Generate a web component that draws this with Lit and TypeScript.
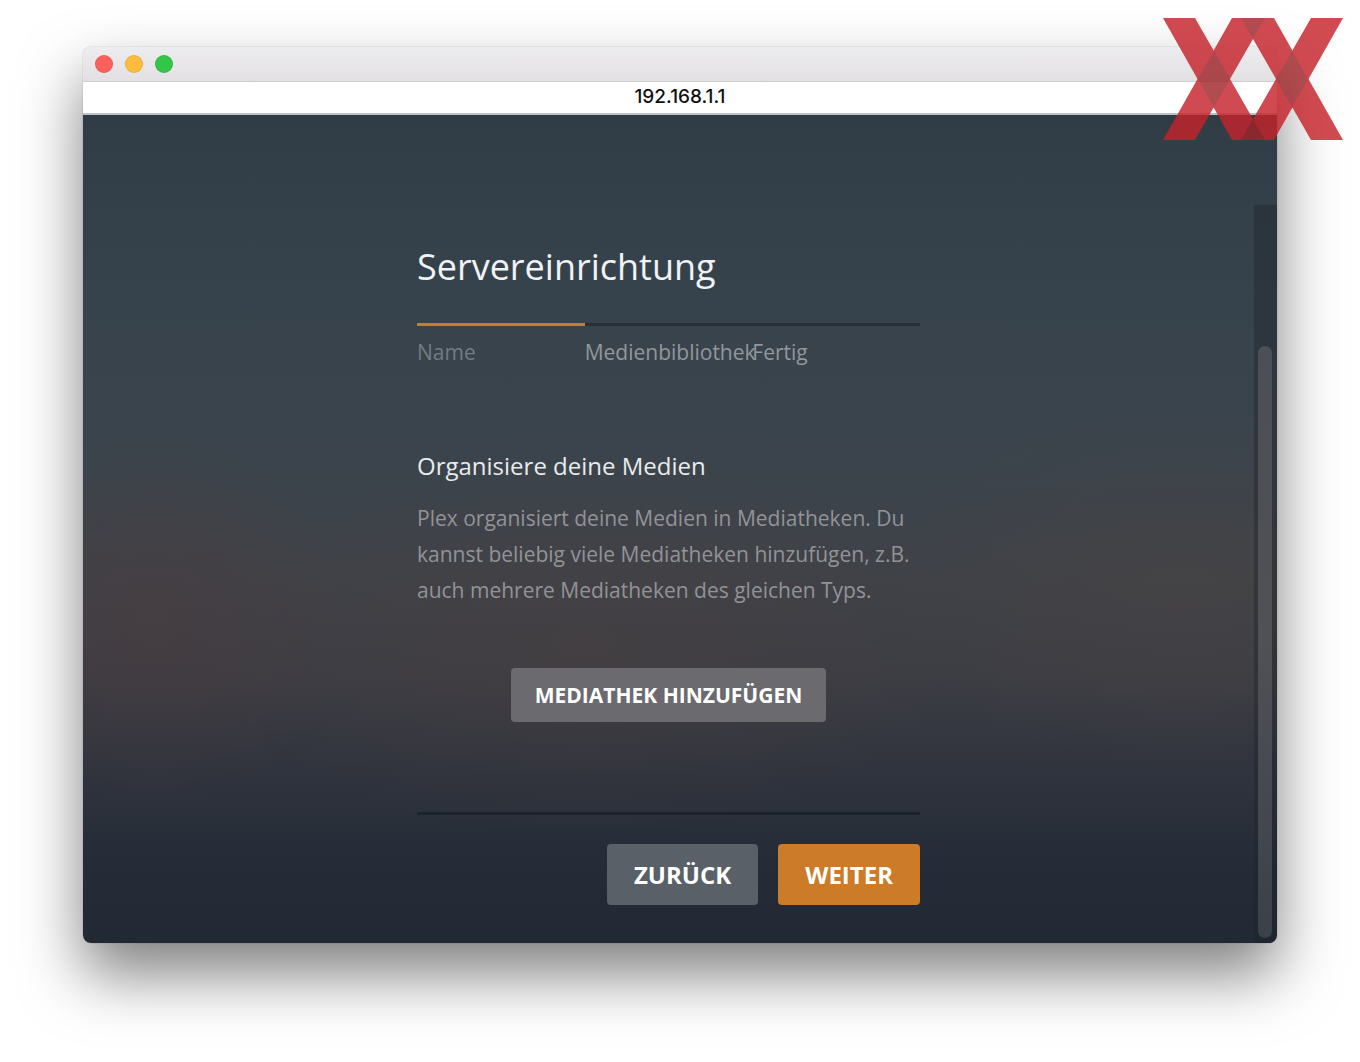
import { LitElement, html, css, svg } from "lit";
import { customElement, property } from "lit/decorators.js";

@customElement("brand-mark")
class BrandMark extends LitElement {
  static styles = css`
    :host {
      display: block;
      width: 180px;
      height: 122px;
    }
    .mark {
      display: block;
      width: 100%;
      height: 100%;
      opacity: 0.81;
    }
    .band {
      fill: #c52229;
    }
    .cross {
      fill: #9f2329;
    }
  `;

  private bands = [
    "0,0 32,0 102,122 69,122",
    "69,0 102,0 32,122 0,122",
    "78,0 111,0 180,122 148,122",
    "148,0 180,0 111,122 78,122",
  ];

  private crosses = [
    "51,33 67,61 51,89 35,61",
    "129,33 145,61 129,89 113,61",
    "78,0 102,0 90,21",
    "90,101 102,122 78,122",
  ];

  render() {
    return html`
      <svg class="mark" viewBox="0 0 180 122" preserveAspectRatio="none" aria-hidden="true">
        ${this.bands.map((p) => svg`<polygon class="band" points=${p} />`)}
        ${this.crosses.map((p) => svg`<polygon class="cross" points=${p} />`)}
      </svg>
    `;
  }
}

@customElement("setup-steps")
class SetupSteps extends LitElement {
  @property({ type: Array }) steps: string[] = [];
  @property({ type: Number }) done = 0;

  static styles = css`
    :host {
      display: block;
    }
    .steps {
      display: grid;
      grid-template-columns: repeat(3, minmax(0, 1fr));
      margin: 0;
      padding: 0;
      list-style: none;
    }
    .step {
      border-top: 3px solid #263038;
      padding-top: 8px;
      font-size: 21px;
      line-height: 36px;
      white-space: nowrap;
      color: #93979a;
    }
    .step.done {
      border-top-color: #cc7b29;
      color: #737b83;
    }
  `;

  render() {
    return html`
      <ol class="steps">
        ${this.steps.map(
          (name, i) => html`<li class="step ${i < this.done ? "done" : ""}">${name}</li>`
        )}
      </ol>
    `;
  }
}

@customElement("app-root")
class AppRoot extends LitElement {
  static styles = css`
    :host {
      display: block;
      position: relative;
      box-sizing: border-box;
      min-height: 100vh;
      padding: 47px 83px 119px;
      overflow: hidden;
      background: #fff;
      font-family: "Open Sans", "Noto Sans", sans-serif;
    }
    .window {
      display: flex;
      flex-direction: column;
      border-radius: 8px;
      box-shadow: 0 0 1px rgba(0, 0, 0, 0.5), 0 31px 62px rgba(0, 0, 0, 0.5);
    }
    .titlebar {
      display: flex;
      align-items: center;
      gap: 12px;
      height: 34px;
      padding: 0 12px;
      border-bottom: 1px solid #cfcdcf;
      border-radius: 8px 8px 0 0;
      background: linear-gradient(#edecee, #e2e0e3);
    }
    .light {
      box-sizing: border-box;
      width: 18px;
      height: 18px;
      padding: 0;
      border: 1px solid rgba(0, 0, 0, 0.08);
      border-radius: 50%;
    }
    .close {
      background: #fc605c;
    }
    .minimise {
      background: #fdbc40;
    }
    .zoom {
      background: #33c748;
    }
    .address {
      height: 31px;
      border-bottom: 2px solid #bcc3c5;
      background: #fff;
      color: #111;
      font: 500 19px/30px Inter, sans-serif;
      text-align: center;
    }
    .page {
      display: flex;
      border-radius: 0 0 8px 8px;
      background:
        radial-gradient(ellipse 190px 190px at 6% 61%, rgba(80, 58, 60, 0.4), transparent),
        radial-gradient(ellipse 380px 190px at 42% 64%, rgba(76, 64, 64, 0.4), transparent),
        radial-gradient(ellipse 300px 180px at 92% 57%, rgba(76, 68, 66, 0.4), transparent),
        linear-gradient(#303d47 0%, #37434c 22%, #3b444c 42%, #3f4248 56%, #3c3d44 68%, #2f333d 80%, #252c37 90%, #222935 100%);
    }
    .content {
      display: flex;
      flex: 1;
      justify-content: center;
      padding: 126px 20px 38px;
    }
    .form {
      width: 100%;
      max-width: 503px;
    }
    .title {
      margin: 0 0 30px;
      color: #f0f2f3;
      font-size: 36px;
      font-weight: 400;
      line-height: 52px;
    }
    .subtitle {
      margin: 78px 0 16px;
      color: #e9ebec;
      font-size: 24px;
      font-weight: 400;
      line-height: 36px;
    }
    .text {
      margin: 0;
      color: #929397;
      font-size: 21px;
      line-height: 36px;
    }
    .library {
      display: flex;
      justify-content: center;
      padding: 60px 0 90px;
      border-bottom: 3px solid #1c222c;
    }
    .actions {
      display: flex;
      justify-content: flex-end;
      gap: 20px;
      padding-top: 29px;
    }
    .button {
      border: 0;
      border-radius: 4px;
      color: #fff;
      font-family: inherit;
      font-weight: 700;
      cursor: pointer;
    }
    .add {
      height: 54px;
      padding: 0 24px;
      background: #6b6a6f;
      font-size: 21px;
    }
    .back,
    .next {
      height: 61px;
      padding: 0 27px;
      font-size: 24px;
    }
    .back {
      background: #5a6068;
    }
    .next {
      background: #cc7b29;
    }
    .scroll {
      display: flex;
      box-sizing: border-box;
      width: 23px;
      margin-top: 90px;
      padding: 141px 5px 5px 4px;
      border-radius: 0 0 8px 0;
      background: rgba(30, 34, 42, 0.4);
    }
    .thumb {
      flex: 1;
      border-radius: 7px;
      background: linear-gradient(#4c4f55, #505157 50%, #3b4148);
    }
    .brand {
      position: absolute;
      top: 18px;
      right: 17px;
    }
  `;

  render() {
    return html`
      <main class="window">
        <header class="titlebar">
          <button class="light close" aria-label="Schließen"></button>
          <button class="light minimise" aria-label="Minimieren"></button>
          <button class="light zoom" aria-label="Vergrößern"></button>
        </header>
        <div class="address">192.168.1.1</div>
        <div class="page">
          <div class="content">
            <div class="form">
              <h1 class="title">Servereinrichtung</h1>
              <setup-steps .steps=${["Name", "Medienbibliothek", "Fertig"]} .done=${1}></setup-steps>
              <h2 class="subtitle">Organisiere deine Medien</h2>
              <p class="text">
                Plex organisiert deine Medien in Mediatheken. Du kannst beliebig viele Mediatheken
                hinzufügen, z.B. auch mehrere Mediatheken des gleichen Typs.
              </p>
              <div class="library">
                <button class="button add">MEDIATHEK HINZUFÜGEN</button>
              </div>
              <div class="actions">
                <button class="button back">ZURÜCK</button>
                <button class="button next">WEITER</button>
              </div>
            </div>
          </div>
          <div class="scroll"><div class="thumb"></div></div>
        </div>
      </main>
      <brand-mark class="brand"></brand-mark>
    `;
  }
}
